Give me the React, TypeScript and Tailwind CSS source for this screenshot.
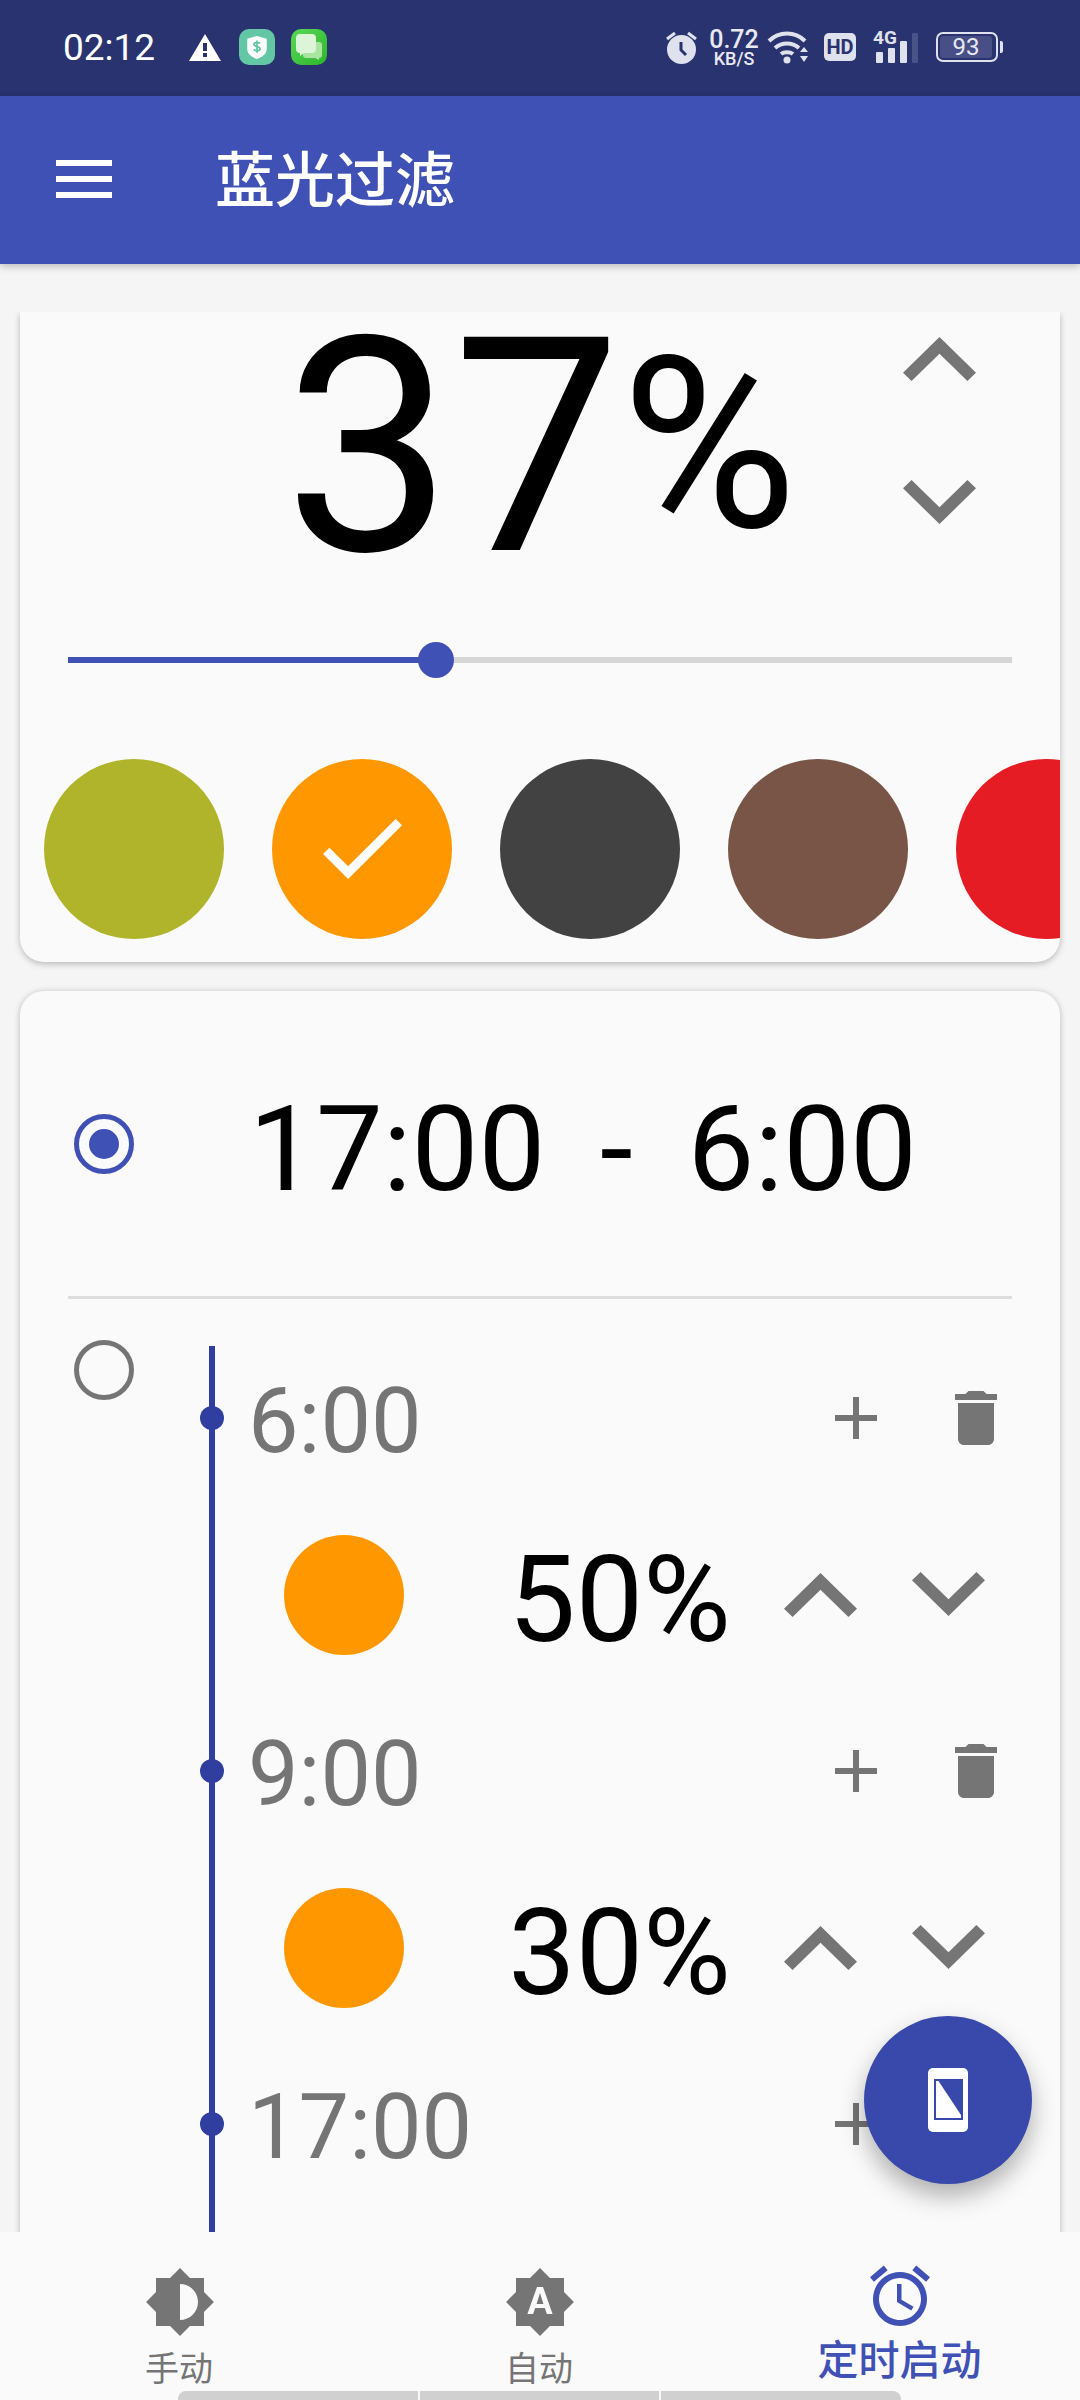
// blue light filter screen, timer tab selected
const sans = "font-['Roboto','Noto_Sans_CJK_SC',sans-serif]"

const swatches = ['#afb42b', '#ff9800', '#424242', '#795548', '#e51c23']

function ChevronUp({ className = '' }: { className?: string }) {
	return (
		<svg className={className} width="73" height="44" viewBox="6 8 12 7.41" preserveAspectRatio="none" fill="#757575">
			<path d="M7.41 15.41L12 10.83l4.59 4.58L18 14l-6-6-6 6z" />
		</svg>
	)
}

function ChevronDown({ className = '' }: { className?: string }) {
	return (
		<svg className={className} width="73" height="44" viewBox="6 8.59 12 7.41" preserveAspectRatio="none" fill="#757575">
			<path d="M7.41 8.59L12 13.17l4.59-4.58L18 10l-6 6-6-6z" />
		</svg>
	)
}

function Plus() {
	return (
		<svg width="42" height="42" viewBox="5 5 14 14" fill="#757575">
			<path d="M19 13h-6v6h-2v-6H5v-2h6V5h2v6h6v2z" />
		</svg>
	)
}

function Trash() {
	return (
		<svg width="42" height="54" viewBox="5 3 14 18" fill="#757575">
			<path d="M6 19c0 1.1.9 2 2 2h8c1.1 0 2-.9 2-2V7H6v12zM19 4h-3.5l-1-1h-5l-1 1H5v2h14V4z" />
		</svg>
	)
}

function TimeRow({ time, trash = true }: { time: string; trash?: boolean }) {
	return (
		<div className="relative h-[144px] flex items-center pr-[63px]">
			<div className="absolute left-[-15px] top-[60px] w-[24px] h-[24px] rounded-full bg-[#303f9f]" />
			<span className="pl-[33px] pt-[8px] text-[90px] leading-none text-[#757575]">{time}</span>
			<div className="ml-auto flex items-center gap-[78px]">
				<Plus />
				{trash ? <Trash /> : <div className="w-[42px] h-[54px]" />}
			</div>
		</div>
	)
}

function ColorRow({ percent }: { percent: string }) {
	return (
		<div className="h-[209px] flex items-center pl-[69px]">
			<div className="w-[120px] h-[120px] rounded-full bg-[#ff9800]" />
			<span className="w-[327px] pt-[10px] text-right text-[120px] leading-none text-black">{percent}</span>
			<ChevronUp className="ml-[53px]" />
			<ChevronDown className="ml-[55px] -mt-[2px]" />
		</div>
	)
}

function StatusBar() {
	return (
		<div className="h-[96px] shrink-0 bg-[#29336f] flex items-center pl-[63px] pb-[2px]">
			<span className="text-[37px] leading-none text-white w-[126px]">02:12</span>
			<svg width="32" height="27" viewBox="0 0 32 27">
				<path fillRule="evenodd" fill="#fff" d="M16 0l16 27H0zM14 9h4v8h-4zM14 19h4v4h-4z" />
			</svg>
			<div className="ml-[18px] w-[36px] h-[36px] rounded-[10px] bg-[#63c7a5] flex items-center justify-center">
				<svg width="20" height="23" viewBox="0 0 22 26">
					<path fill="#fff" d="M11 0l11 3v12c0 5-5 9-11 11C5 24 0 20 0 15V3z" />
					<path fill="none" stroke="#63c7a5" strokeWidth="2" d="M14.500 8.500c-1-1.500-7-1.800-7 1.200 0 3 7 1.600 7 4.600 0 3-6 2.800-7.200 1M11 5v14" />
				</svg>
			</div>
			<div className="ml-[16px] w-[36px] h-[36px] rounded-[10px] bg-gradient-to-br from-[#58d956] to-[#2cb52c] flex items-center justify-center">
				<svg width="26" height="26" viewBox="0 0 26 26">
					<path d="M10 8h13a3 3 0 0 1 3 3v10a3 3 0 0 1-3 3v2l-4-2h-9a3 3 0 0 1-3-3V11a3 3 0 0 1 3-3z" fill="#a9e5a0" />
					<path d="M4 0h12a4 4 0 0 1 4 4v11a4 4 0 0 1-4 4H8l-4 3v-3a4 4 0 0 1-4-4V4a4 4 0 0 1 4-4z" fill="#dcf5d8" />
				</svg>
			</div>
			<div className="ml-[339px] flex items-center">
				<svg width="31" height="33" viewBox="0 0 31 33">
					<circle cx="15.500" cy="18.500" r="14.500" fill="#dfe1ec" />
					<path d="M1 8l8-6M30 8l-8-6" stroke="#dfe1ec" strokeWidth="3" fill="none" />
					<path d="M15 11v8l5 5" stroke="#29336f" strokeWidth="3" fill="none" />
				</svg>
				<div className="ml-[11px] w-[52px] flex flex-col items-center text-[#e8e9f1] font-medium">
					<span className="text-[25px] leading-[22px]">0.72</span>
					<span className="text-[18px] leading-[15px]">KB/S</span>
				</div>
				<svg className="ml-[7px]" width="42" height="34" viewBox="0 0 42 34" fill="none" stroke="#dfe1ec" strokeWidth="4">
					<path d="M2 11c10-10 26-10 36 0M8 18c7-6 17-6 24 0M14 24c3-2.500 9-2.500 12 0" />
					<circle cx="20" cy="30" r="3.500" fill="#dfe1ec" stroke="none" />
					<path d="M33 22h8l-4-5zM33 26h8l-4 6z" fill="#dfe1ec" stroke="none" />
				</svg>
				<div className="ml-[15px] w-[32px] h-[28px] rounded-[5px] bg-[#dfe1ec] flex items-center justify-center text-[#29336f] text-[20px] leading-none font-bold">
					HD
				</div>
				<div className="relative ml-[20px] w-[43px] h-[32px] flex items-end gap-[5px]">
					<span className="absolute left-[-3px] top-[-1px] text-[19px] leading-[16px] font-bold text-[#dfe1ec]">4G</span>
					<div className="w-[7px] h-[11px] bg-[#dfe1ec] rounded-[1px]" />
					<div className="w-[7px] h-[15px] bg-[#dfe1ec] rounded-[1px]" />
					<div className="w-[7px] h-[22px] bg-[#dfe1ec] rounded-[1px]" />
					<div className="w-[6px] h-[30px] bg-[#4a5387] rounded-[1px]" />
				</div>
				<div className="ml-[17px] w-[62px] h-[30px] rounded-[7px] border-[2px] border-[#dfe1ec] p-[2px]">
					<div className="w-[52px] h-full rounded-[3px] bg-[#484f86] flex items-center justify-center text-[24px] leading-none text-[#e8e9f1]">
						93
					</div>
				</div>
				<div className="ml-[2px] w-[3px] h-[12px] rounded-r-[2px] bg-[#dfe1ec]" />
			</div>
		</div>
	)
}

export default function App() {
	return (
		<div className={`${sans} relative w-[1080px] h-[2400px] overflow-hidden bg-[#f5f5f5] flex flex-col`}>
			<StatusBar />

			<header className="relative z-10 h-[168px] shrink-0 bg-[#3f51b5] flex items-center pl-[56px] shadow-[0_2px_8px_rgba(0,0,0,0.25)]">
				<div className="flex flex-col gap-[10px] mt-[-2px]">
					<div className="w-[56px] h-[6px] bg-white" />
					<div className="w-[56px] h-[6px] bg-white" />
					<div className="w-[56px] h-[6px] bg-white" />
				</div>
				<h1 className="ml-[103px] mt-[3px] text-[60px] leading-none font-medium text-white">蓝光过滤</h1>
			</header>

			<main className="flex-1 min-h-0 mt-[48px] px-[20px]">
				{/* the card is scrolled under the top edge, so its shadow stops there */}
				<section className="h-[650px] bg-[#fafafa] rounded-b-[24px] shadow-[0_2px_6px_rgba(0,0,0,0.25)] [clip-path:inset(0_-20px_-20px_-20px)]">
					<div className="h-[312px] flex items-start pr-[84px]">
						<div className="flex items-start pl-[264px]">
							<span className="text-[300px] leading-[280px] mt-[-4px] text-black">37</span>
							<span className="text-[240px] leading-[240px] mt-[13px] text-black">%</span>
						</div>
						<div className="ml-auto pt-[25px] flex flex-col gap-[99px]">
							<ChevronUp />
							<ChevronDown />
						</div>
					</div>

					<div className="relative mx-[48px] h-[6px] mt-[33px] bg-[#d6d6d6]">
						<div className="h-full w-[368px] bg-[#3f51b5]" />
						<div className="absolute left-[350px] top-[-15px] w-[36px] h-[36px] rounded-full bg-[#3f51b5]" />
					</div>

					<div className="mt-[96px] pl-[24px] flex gap-[48px] overflow-hidden">
						{swatches.map((c, i) => (
							<div
								key={c}
								className="w-[180px] h-[180px] shrink-0 rounded-full flex items-center justify-center"
								style={{ backgroundColor: c }}
							>
								{i === 1 && (
									<svg width="79" height="60" viewBox="3.410 5.590 17.590 13.410" fill="#fff" preserveAspectRatio="none">
										<path d="M9 16.170L4.830 12l-1.420 1.410L9 19 21 7l-1.410-1.410z" />
									</svg>
								)}
							</div>
						))}
					</div>
				</section>

				<section className="mt-[29px] h-[1400px] bg-[#fafafa] rounded-t-[24px] shadow-[0_1px_6px_rgba(0,0,0,0.25)]">
					<div className="h-[305px] flex items-center pl-[54px]">
						<div className="w-[60px] h-[60px] rounded-full border-[5px] border-[#3f51b5] flex items-center justify-center">
							<div className="w-[30px] h-[30px] rounded-full bg-[#3f51b5]" />
						</div>
						<span className="ml-[115px] mt-[12px] text-[119px] leading-none text-black whitespace-pre [word-spacing:-2.2px]">17:00  -  6:00</span>
					</div>
					<div className="mx-[48px] h-[3px] bg-[#dedede]" />

					<div className="flex items-start pl-[54px] pt-[41px]">
						<div className="w-[60px] h-[60px] shrink-0 rounded-full border-[5px] border-[#757575]" />
						<div className="ml-[75px] mt-[6px] flex-1 border-l-[6px] border-[#303f9f]">
							<TimeRow time="6:00" />
							<ColorRow percent="50%" />
							<TimeRow time="9:00" />
							<ColorRow percent="30%" />
							<TimeRow time="17:00" />
							<div className="h-[209px]" />
						</div>
					</div>
				</section>
			</main>

			<nav className="relative z-10 h-[168px] shrink-0 bg-[#fafafa] grid grid-cols-3">
				<div className="flex flex-col items-center pt-[34px] text-[#757575]">
					<svg width="72" height="72" viewBox="0 0 24 24" fill="#757575">
						<path d="M20 15.310L23.310 12 20 8.690V4h-4.690L12 .69 8.690 4H4v4.690L.69 12 4 15.310V20h4.690L12 23.310 15.310 20H20v-4.690zM12 18V6c3.310 0 6 2.690 6 6s-2.690 6-6 6z" />
					</svg>
					<span className="text-[34px] leading-none mt-[14px] -ml-[2px]">手动</span>
				</div>
				<div className="flex flex-col items-center pt-[34px] text-[#757575]">
					<svg width="72" height="72" viewBox="0 0 24 24" fill="#757575">
						<path d="M10.850 12.650h2.300L12 9l-1.150 3.650zM20 8.690V4h-4.690L12 .69 8.690 4H4v4.690L.69 12 4 15.310V20h4.690L12 23.310 15.310 20H20v-4.690L23.310 12 20 8.690zM14.300 16l-.7-2h-3.200l-.7 2H7.800L11 7h2l3.200 9h-1.900z" />
					</svg>
					<span className="text-[34px] leading-none mt-[14px] -ml-[2px]">自动</span>
				</div>
				<div className="flex flex-col items-center pt-[28px] text-[#3f51b5]">
					<svg width="72" height="72" viewBox="0 0 24 24" fill="#3f51b5">
						<path d="M22 5.720l-4.600-3.860-1.290 1.530 4.600 3.860L22 5.720zM7.880 3.390L6.600 1.860 2 5.710l1.290 1.530 4.590-3.850zM12.500 8H11v6l4.750 2.850.75-1.230-4-2.370V8zM12 4c-4.970 0-9 4.030-9 9s4.020 9 9 9c4.970 0 9-4.030 9-9s-4.030-9-9-9zm0 16c-3.870 0-7-3.130-7-7s3.130-7 7-7 7 3.130 7 7-3.130 7-7 7z" />
					</svg>
					<span className="text-[41px] leading-none font-medium mt-[9px] -ml-[1px]">定时启动</span>
				</div>

				<div className="absolute left-[178px] bottom-0 w-[723px] h-[9px] flex gap-[2px]">
					<div className="flex-1 bg-[#d0d0d0] rounded-tl-[8px]" />
					<div className="flex-1 bg-[#d0d0d0]" />
					<div className="flex-1 bg-[#d0d0d0] rounded-tr-[8px]" />
				</div>
			</nav>

			<button className="absolute z-20 right-[48px] bottom-[216px] w-[168px] h-[168px] rounded-full bg-[#3949ab] flex items-center justify-center shadow-[0_12px_24px_rgba(0,0,0,0.3)]">
				<svg width="40" height="64" viewBox="0 0 40 64">
					<rect width="40" height="64" rx="5" fill="#fff" />
					<rect x="6" y="11" width="29" height="41" fill="#3949ab" />
					<path d="M8 13h2.500L33 47v3H8z" fill="#fff" />
				</svg>
			</button>
		</div>
	)
}
